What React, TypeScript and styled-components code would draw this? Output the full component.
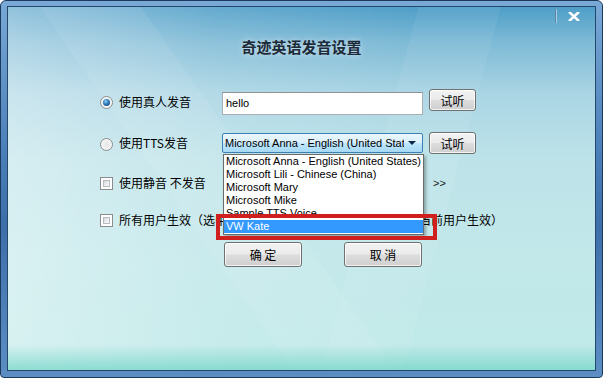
import React from "react";
import styled, { createGlobalStyle } from "styled-components";

const GlobalStyle = createGlobalStyle`
  html, body { margin: 0; padding: 0; width: 603px; height: 378px; overflow: hidden; }
  body { font-family: "Noto Sans CJK SC", "Noto Sans", sans-serif; }
  #root { width: 603px; height: 378px; }
`;

const Window = styled.div`
  width: 603px;
  height: 378px;
  box-sizing: border-box;
  border: 1px solid #1b3a5e;
  border-radius: 6px 6px 4px 4px;
  padding: 5px 6px 6px 6px;
  background: linear-gradient(to bottom, #7aa9d6 0%, #4a7fb8 40%, #3c6fa8 60%, #5c8ec4 100%);
`;

const Inner = styled.div`
  position: relative;
  height: 100%;
  box-sizing: border-box;
  border: 1px solid #23476d;
  display: flex;
  flex-direction: column;
  overflow: hidden;
  background:
    linear-gradient(to bottom, transparent 0%, transparent 93%, rgba(110, 212, 198, 0.7) 100%),
    linear-gradient(55deg, transparent 0%, transparent 34%, rgba(255, 255, 255, 0.07) 34%, rgba(255, 255, 255, 0.07) 46%, transparent 46%),
    linear-gradient(105deg, transparent 0%, transparent 60%, rgba(255, 255, 255, 0.06) 60%, rgba(255, 255, 255, 0.06) 72%, transparent 72%),
    linear-gradient(to right, rgba(255, 255, 255, 0.38) 0%, rgba(255, 255, 255, 0.12) 35%, rgba(255, 255, 255, 0) 70%),
    linear-gradient(to bottom, #4f9ec8 0%, #7fbbd6 10%, #aad5e4 24%, #bde3e9 42%, #c2e8ea 70%, #bfe9e8 100%);
`;

const TitleBar = styled.div`
  height: 18px;
  display: flex;
  justify-content: flex-end;
  align-items: center;
  padding-right: 15px;
  gap: 12px;
`;

const Separator = styled.span`
  width: 1px;
  height: 14px;
  background: #5f88a6;
  box-shadow: 1px 0 0 rgba(255, 255, 255, 0.45);
`;

const Close = styled.svg`
  width: 12px;
  height: 9px;
  display: block;
`;

const Title = styled.div`
  margin-top: 12px;
  height: 20px;
  line-height: 20px;
  text-align: center;
  font-size: 15px;
  font-weight: bold;
  color: #1d2a38;
  text-shadow: 0 0 6px rgba(255, 255, 255, 0.6);
`;

const Form = styled.div`
  display: flex;
  flex-direction: column;
  padding-left: 92px;
  margin-top: 32px;
`;

const Row = styled.div<{ $h: number; $mt: number; $align?: string }>`
  display: flex;
  align-items: ${(p) => p.$align || "center"};
  height: ${(p) => p.$h}px;
  margin-top: ${(p) => p.$mt}px;
`;

const Radio = styled.span<{ $checked?: boolean; $mt?: number }>`
  flex: none;
  width: 13px;
  height: 13px;
  margin-top: ${(p) => p.$mt || 0}px;
  box-sizing: border-box;
  border-radius: 50%;
  border: 1px solid #8a8c8e;
  background: radial-gradient(circle at 50% 50%, #e4e5e6 0%, #f7f7f7 70%, #ffffff 100%);
  display: flex;
  align-items: center;
  justify-content: center;
  &::after {
    content: "";
    display: ${(p) => (p.$checked ? "block" : "none")};
    width: 7px;
    height: 7px;
    border-radius: 50%;
    background: radial-gradient(circle at 40% 35%, #8fd0f7 0%, #2c78b8 45%, #123f6c 100%);
  }
`;

const Check = styled.span`
  flex: none;
  width: 13px;
  height: 13px;
  box-sizing: border-box;
  border: 1px solid #8a8c8e;
  background: #fff;
  padding: 2px;
  &::after {
    content: "";
    display: block;
    width: 100%;
    height: 100%;
    box-sizing: border-box;
    border: 1px solid #b8bcc2;
    background: linear-gradient(135deg, #d4d6da 0%, #eeeff1 60%, #f8f8f8 100%);
  }
`;

const Label = styled.span<{ $w?: number; $mt?: number }>`
  flex: none;
  margin-left: 6px;
  width: ${(p) => (p.$w ? `${p.$w}px` : "auto")};
  margin-top: ${(p) => p.$mt || 0}px;
  font-size: 12px;
  line-height: 16px;
  color: #000;
  white-space: nowrap;
`;

const TextInput = styled.div`
  flex: none;
  margin-top: 3px;
  width: 201px;
  height: 23px;
  box-sizing: border-box;
  border: 1px solid #abadb3;
  border-top-color: #8e9096;
  background: #fff;
  padding-left: 3px;
  font-family: "Liberation Sans", Arial, sans-serif;
  font-size: 11px;
  line-height: 21px;
  color: #000;
`;

const Btn = styled.button<{ $w: number; $h: number }>`
  flex: none;
  width: ${(p) => p.$w}px;
  height: ${(p) => p.$h}px;
  box-sizing: border-box;
  padding: 0;
  border: 1px solid #707070;
  border-radius: 3px;
  background: linear-gradient(to bottom, #f2f2f2 0%, #ebebeb 48%, #dddddd 52%, #cfcfcf 100%);
  box-shadow: inset 0 0 0 1px rgba(255, 255, 255, 0.75);
  font-family: "Noto Sans CJK SC", sans-serif;
  font-size: 12px;
  color: #000;
  white-space: pre;
`;

const Gap = styled.span<{ $w: number }>`
  flex: none;
  width: ${(p) => p.$w}px;
`;

const SelectWrap = styled.div`
  position: relative;
  flex: none;
  width: 201px;
  height: 20px;
`;

const SelectBox = styled.div`
  height: 20px;
  box-sizing: border-box;
  border: 1px solid #3c7fb1;
  border-radius: 2px;
  background: linear-gradient(to bottom, #eaf6fd 0%, #d9f0fc 48%, #bee6fd 52%, #a7d9f5 100%);
  display: flex;
  align-items: center;
  padding-left: 2px;
  padding-right: 6px;
  font-family: "Liberation Sans", Arial, sans-serif;
  font-size: 11px;
  color: #000;
`;

const SelectText = styled.span`
  flex: 1;
  overflow: hidden;
  white-space: nowrap;
`;

const Arrow = styled.span`
  flex: none;
  width: 0;
  height: 0;
  margin-left: 4px;
  border-left: 4px solid transparent;
  border-right: 4px solid transparent;
  border-top: 4px solid #0c2a48;
`;

const List = styled.div`
  position: absolute;
  z-index: 5;
  left: 1px;
  top: 21px;
  width: 201px;
  box-sizing: border-box;
  border: 1px solid #6b6b6b;
  background: #fff;
  padding-bottom: 1px;
  box-shadow: 2px 2px 3px rgba(0, 0, 0, 0.3);
  font-family: "Liberation Sans", Arial, sans-serif;
  font-size: 11px;
`;

const Item = styled.div<{ $sel?: boolean }>`
  height: 13px;
  line-height: 13px;
  padding-left: 2px;
  white-space: nowrap;
  overflow: hidden;
  color: ${(p) => (p.$sel ? "#fff" : "#000")};
  background: ${(p) => (p.$sel ? "#3399ff" : "transparent")};
`;

const Highlight = styled.div`
  position: absolute;
  z-index: 6;
  left: -6px;
  top: 81px;
  width: 221px;
  height: 26px;
  box-sizing: border-box;
  border: 4px solid #d01f1f;
`;

const More = styled.span`
  flex: none;
  padding-left: 4px;
  font-family: "Liberation Sans", Arial, sans-serif;
  font-size: 11px;
  color: #1a1a1a;
`;

const Actions = styled.div`
  display: flex;
  gap: 42px;
  margin-top: 11px;
  margin-left: 124px;
`;

const voices = [
  "Microsoft Anna - English (United States)",
  "Microsoft Lili - Chinese (China)",
  "Microsoft Mary",
  "Microsoft Mike",
  "Sample TTS Voice",
  "VW Kate",
];

export default function App() {
  return (
    <>
      <GlobalStyle />
      <Window>
        <Inner>
          <TitleBar>
            <Separator />
            <Close viewBox="0 0 12 9">
              <path d="M2 0.8 L10 8.2 M10 0.8 L2 8.2" stroke="#ffffff" strokeWidth="2.6" strokeLinecap="square" />
            </Close>
          </TitleBar>
          <Title>奇迹英语发音设置</Title>
          <Form>
            <Row $h={26} $mt={0} $align="flex-start">
              <Radio $checked $mt={7} />
              <Label $w={103} $mt={5}>使用真人发音</Label>
              <TextInput>hello</TextInput>
              <Gap $w={6} />
              <Btn $w={47} $h={22}>试听</Btn>
            </Row>
            <Row $h={22} $mt={17}>
              <Radio $mt={2} />
              <Label $w={103}>使用TTS发音</Label>
              <SelectWrap>
                <SelectBox>
                  <SelectText>Microsoft Anna - English (United States)</SelectText>
                  <Arrow />
                </SelectBox>
                <List>
                  {voices.map((v, i) => (
                    <Item key={v} $sel={i === voices.length - 1}>
                      {v}
                    </Item>
                  ))}
                </List>
                <Highlight />
              </SelectWrap>
              <Gap $w={6} />
              <Btn $w={47} $h={22}>试听</Btn>
            </Row>
            <Row $h={22} $mt={18}>
              <Check />
              <Label $w={103}>使用静音 不发音</Label>
              <Gap $w={207} />
              <More>&gt;&gt;</More>
            </Row>
            <Row $h={22} $mt={15}>
              <Check />
              <Label>所有用户生效（选中后对本机所有用户生效，不选中则对当前用户生效）</Label>
            </Row>
            <Actions>
              <Btn $w={78} $h={25}>确 定</Btn>
              <Btn $w={78} $h={25}>取 消</Btn>
            </Actions>
          </Form>
        </Inner>
      </Window>
    </>
  );
}
